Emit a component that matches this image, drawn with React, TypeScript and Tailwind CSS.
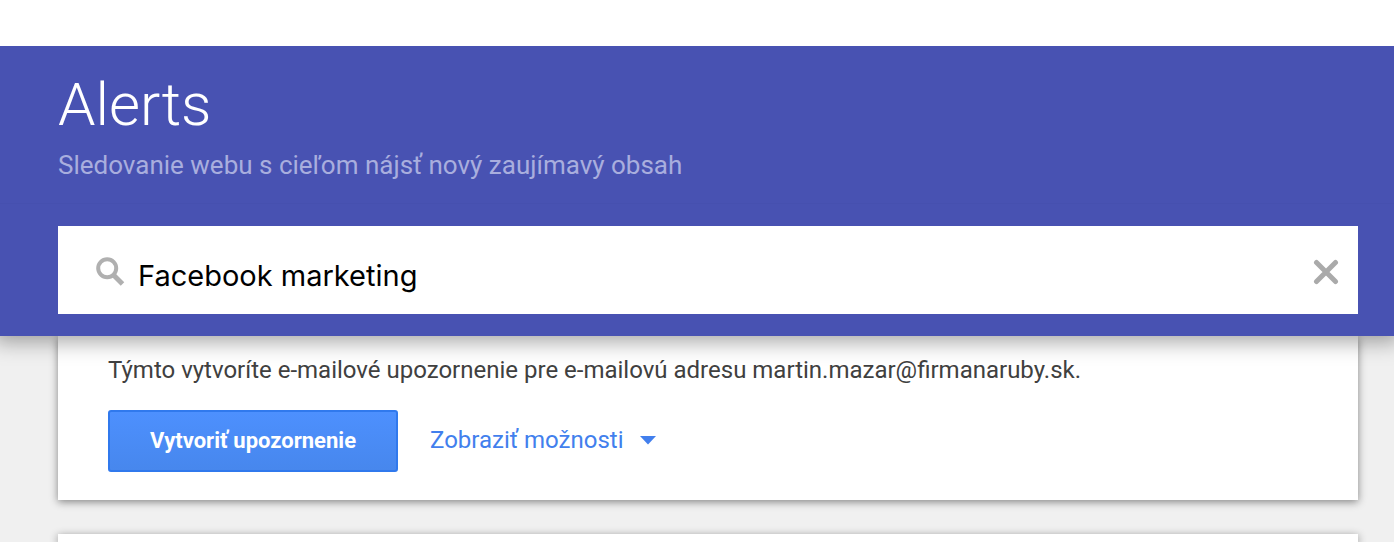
import React, { useState } from 'react';

const SearchIcon: React.FC<React.SVGProps<SVGSVGElement>> = (props) => (
    <svg width="30" height="30" viewBox="0 0 30 30" fill="none" stroke="currentColor" {...props}>
        <circle cx="11.2" cy="11.2" r="9" strokeWidth="4" />
        <path d="M17.5 18 26.5 27" strokeWidth="5" />
    </svg>
);

const ClearIcon: React.FC<React.SVGProps<SVGSVGElement>> = (props) => (
    <svg width="26" height="26" viewBox="0 0 26 26" fill="none" stroke="currentColor" strokeWidth="5" strokeLinecap="round" {...props}>
        <path d="M3.5 3.5 22.5 22.5M22.5 3.5 3.5 22.5" />
    </svg>
);

const App: React.FC = () => {
    const [query, setQuery] = useState('Facebook marketing');

    return (
        <div className="min-h-screen bg-[#f0f0f0] font-[Roboto,sans-serif]">
            <div className="relative z-20 h-[46px] bg-white" />
            <header className="relative z-10 bg-[#4852b2] shadow-[0_0_20px_6px_rgba(0,0,0,0.35)]">
                <div className="h-[158px] border-b border-[#4650af] px-[58px] pt-6">
                    <h1 className="text-[60px] leading-[70px] font-light text-white">Alerts</h1>
                    <p className="mt-2 text-[26px] leading-[34px] text-[#a9aede]">Sledovanie webu s cieľom nájsť nový zaujímavý obsah</p>
                </div>
                <div className="pt-[22px] pr-9 pb-[22px] pl-[58px]">
                    <form className="flex h-[88px] items-center bg-white pt-1 pr-[19px] pl-[38px]" onSubmit={(e) => e.preventDefault()}>
                        <SearchIcon className="shrink-0 text-[#b0b0b0]" />
                        <input
                            type="text"
                            value={query}
                            onChange={(e) => setQuery(e.target.value)}
                            aria-label="Vytvoriť upozornenie na tému"
                            className="ml-3 min-w-0 grow pt-2 font-[Inter,sans-serif] text-[29px] leading-10 text-black outline-none"
                        />
                        <button type="button" aria-label="Vymazať" onClick={() => setQuery('')}>
                            <ClearIcon className="text-[#aaaaaa]" />
                        </button>
                    </form>
                </div>
            </header>
            <main className="pr-9 pl-[58px]">
                <section className="h-[164px] bg-white px-[50px] pt-4 shadow-[0_2px_8px_rgba(0,0,0,0.45)]">
                    <p className="text-2xl leading-9 text-[#404040]">
                        Týmto vytvoríte e-mailové upozornenie pre e-mailovú adresu martin.mazar@firmanaruby.sk.
                    </p>
                    <div className="mt-[22px] flex items-center gap-8">
                        <button type="button" className="h-[62px] w-[290px] rounded-[3px] border-2 border-[#3079ed] bg-linear-to-b from-[#4d90fe] to-[#4787ed] pb-0.5 text-[22px] font-bold text-white">
                            Vytvoriť upozornenie
                        </button>
                        <button type="button" className="flex items-center gap-4 pb-0.5 text-2xl text-[#427fed]">
                            Zobraziť možnosti
                            <svg width="18" height="10" viewBox="0 0 18 10" fill="currentColor">
                                <path d="M0 1H16L8 9.5Z" />
                            </svg>
                        </button>
                    </div>
                </section>
                <section className="mt-[34px] h-2 bg-white shadow-[0_2px_8px_rgba(0,0,0,0.45)]" />
            </main>
        </div>
    );
};

export default App;
